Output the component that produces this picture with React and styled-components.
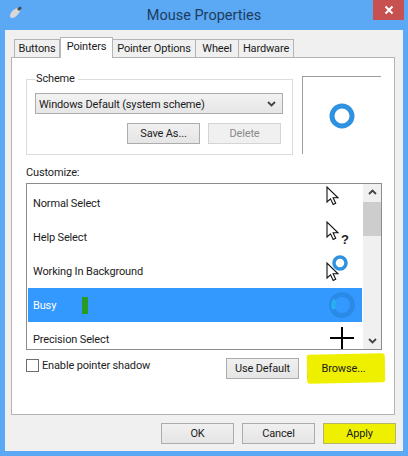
import styled, { createGlobalStyle } from "styled-components"

const GlobalStyle = createGlobalStyle`
	html, body {
		margin: 0;
		padding: 0;
		background: #5ba8f4;
	}
	* {
		box-sizing: border-box;
	}
`

const Window = styled.div`
	width: 408px;
	height: 456px;
	background: #5ba8f4;
	padding: 0 5px 5px;
	display: flex;
	flex-direction: column;
	font-family: Roboto, "Liberation Sans", sans-serif;
	font-size: 11px;
	letter-spacing: -0.15px;
	color: #1c1c1c;
	overflow: hidden;
`

const TitleBar = styled.div`
	height: 30px;
	flex: none;
	position: relative;
	display: flex;
	align-items: center;
	justify-content: center;
	font-size: 14.5px;
	letter-spacing: 0;
	color: #1d3d5c;
`

const AppIcon = styled.svg`
	position: absolute;
	left: 2px;
	top: 4px;
`

const CloseButton = styled.div`
	position: absolute;
	right: -1px;
	top: 0;
	width: 31px;
	height: 20px;
	background: #c75050;
	display: flex;
	align-items: center;
	justify-content: center;
`

const Body = styled.div`
	flex: 1;
	background: #f0f0f0;
	padding: 8px 7px 6px 6px;
	display: flex;
	flex-direction: column;
`

const TabStrip = styled.div`
	display: flex;
	height: 20px;
	padding-left: 3px;
	flex: none;
	position: relative;
	z-index: 1;
`

const Tab = styled.div`
	height: ${(p) => (p.$active ? "21px" : "19px")};
	margin-top: ${(p) => (p.$active ? "-1px" : "1px")};
	width: ${(p) => p.$width}px;
	background: ${(p) => (p.$active ? "#fff" : "#f0f0f0")};
	border: 1px solid #b4b4b4;
	border-left: ${(p) => (p.$first || p.$active ? "1px solid #b4b4b4" : "none")};
	border-bottom: ${(p) => (p.$active ? "none" : "1px solid #b4b4b4")};
	display: flex;
	align-items: center;
	justify-content: center;
	padding-bottom: ${(p) => (p.$active ? "3px" : "0")};
	position: relative;
	z-index: ${(p) => (p.$active ? 2 : 1)};
`

const TabPanel = styled.div`
	background: #fff;
	border: 1px solid #b4b4b4;
	width: 384px;
	height: 358px;
	margin-top: -1px;
	padding: 18px 12px 0 14px;
	flex: none;
`

const TopRow = styled.div`
	display: flex;
	gap: 9px;
	height: 79px;
`

const Group = styled.fieldset`
	width: 267px;
	height: 79px;
	margin: 0;
	padding: 0 8px 0 8px;
	border: 1px solid #dcdcdc;
	position: relative;
	display: flex;
	flex-direction: column;
	min-width: 0;
`

const Legend = styled.legend`
	padding: 0 3px 0 1px;
	margin-left: 0;
	line-height: 14px;
	height: 7px;
	margin-top: 0;
	& > span {
		position: relative;
		top: -4px;
	}
`

const SelectBox = styled.div`
	width: 248px;
	height: 21px;
	margin-top: 10px;
	background: linear-gradient(#f2f2f2, #e6e6e6);
	border: 1px solid #acacac;
	display: flex;
	align-items: center;
	justify-content: space-between;
	padding: 1px 6px 0 3px;
`

const ButtonRow = styled.div`
	display: flex;
	gap: 8px;
	justify-content: flex-end;
	margin-top: 9px;
	padding-right: 3px;
`

const Button = styled.div`
	width: 73px;
	height: 21px;
	flex: none;
	display: flex;
	align-items: center;
	justify-content: center;
	background: ${(p) => (p.$disabled ? "#f0f0f0" : "linear-gradient(#f0f0f0, #e5e5e5)")};
	border: 1px solid ${(p) => (p.$disabled ? "#d4d4d4" : "#acacac")};
	color: ${(p) => (p.$disabled ? "#8a8a8a" : "#1c1c1c")};
`

const MarkedButton = styled(Button)`
	background: #eef000;
	border-color: ${(p) => p.$edge};
	position: relative;
	z-index: 0;
	&::before {
		content: "";
		position: absolute;
		z-index: -1;
		left: ${(p) => p.$spill[0]}px;
		right: ${(p) => p.$spill[1]}px;
		top: ${(p) => p.$spill[2]}px;
		bottom: ${(p) => p.$spill[3]}px;
		background: #eef000;
		border-radius: 2px 3px 2px 3px;
		transform: rotate(-1deg);
	}
`

const Preview = styled.div`
	width: 79px;
	height: 78px;
	border-top: 1px solid #9d9d9d;
	border-left: 1px solid #9d9d9d;
	display: flex;
	align-items: center;
	justify-content: center;
`

const Label = styled.div`
	margin-top: 10px;
	height: 18px;
	line-height: 16px;
`

const List = styled.div`
	width: 356px;
	height: 167px;
	border: 1px solid #8c8c8c;
	display: flex;
	background: #fff;
`

const Rows = styled.div`
	flex: 1;
	padding: 2px 1px 0 1px;
	overflow: hidden;
`

const Row = styled.div`
	height: 34px;
	display: flex;
	align-items: center;
	padding-left: 5px;
	position: relative;
	background: ${(p) => (p.$selected ? "#3399ff" : "transparent")};
	color: ${(p) => (p.$selected ? "#fff" : "#1c1c1c")};
`

const RowIcon = styled.svg`
	position: absolute;
	right: 0;
	top: 0;
	overflow: visible;
`

const BusyBar = styled.div`
	width: 6px;
	height: 17px;
	background: #2a9a22;
	margin-left: 26px;
`

const Scrollbar = styled.div`
	width: 18px;
	flex: none;
	background: #f0f0f0;
	display: flex;
	flex-direction: column;
	align-items: center;
	justify-content: space-between;
	position: relative;
	padding: 5px 0;
`

const Thumb = styled.div`
	position: absolute;
	top: 18px;
	left: 0;
	width: 18px;
	height: 34px;
	background: #cdcdcd;
`

const Options = styled.div`
	display: flex;
	align-items: flex-start;
	margin-top: 8px;
`

const CheckLabel = styled.div`
	display: flex;
	align-items: center;
	gap: 3px;
	width: 200px;
	height: 14px;
`

const CheckBox = styled.div`
	width: 13px;
	height: 13px;
	background: #fff;
	border: 1px solid #6e6e6e;
`

const OptionButtons = styled.div`
	display: flex;
	gap: 8px;
`

const Footer = styled.div`
	display: flex;
	justify-content: flex-end;
	gap: 8px;
	margin-top: 8px;
`

const Arrow = () => (
	<svg width="9" height="6" viewBox="0 0 9 6">
		<path d="M1 1l3.500 3.500L8 1" fill="none" stroke="#444" strokeWidth="1.800" />
	</svg>
)

const ArrowUp = () => (
	<svg width="9" height="6" viewBox="0 0 9 6">
		<path d="M1 5l3.500-3.500L8 5" fill="none" stroke="#444" strokeWidth="1.800" />
	</svg>
)

const Pointer = ({ x, y }) => (
	<path
		transform={`translate(${x} ${y})`}
		d="M0 0v15l3.500-3.200 2.700 5.700 2.500-1.200-2.600-5.500h4.900z"
		fill="#fff"
		stroke="#111"
		strokeWidth="1.100"
	/>
)

const tabs = [
	{ name: "Buttons", width: 46, first: true },
	{ name: "Pointers", width: 53, active: true },
	{ name: "Pointer Options", width: 83 },
	{ name: "Wheel", width: 43 },
	{ name: "Hardware", width: 55 },
]

function App() {
	return (
		<>
			<GlobalStyle />
			<Window>
				<TitleBar>
					<AppIcon width="20" height="16" viewBox="0 0 20 16">
						<path d="M3 12c0-4 5-8 8-8 2 0 3 2 1 5-2 3-5 5-7 5-1 0-2-1-2-2z" fill="#d8d8d8" />
						<path d="M10 5l3-2.500 2 1.500-3 3z" fill="#4a4a4a" />
					</AppIcon>
					Mouse Properties
					<CloseButton>
						<svg width="10" height="10" viewBox="0 0 10 10">
							<path d="M1.500 1.500l7 7M8.500 1.500l-7 7" stroke="#fff" strokeWidth="2" />
						</svg>
					</CloseButton>
				</TitleBar>
				<Body>
					<TabStrip>
						{tabs.map((tab) => (
							<Tab key={tab.name} $active={tab.active} $first={tab.first} $width={tab.width}>
								{tab.name}
							</Tab>
						))}
					</TabStrip>
					<TabPanel>
						<TopRow>
							<Group>
								<Legend><span>Scheme</span></Legend>
								<SelectBox>
									Windows Default (system scheme)
									<Arrow />
								</SelectBox>
								<ButtonRow>
									<Button>Save As...</Button>
									<Button $disabled>Delete</Button>
								</ButtonRow>
							</Group>
							<Preview>
								<svg width="28" height="28" viewBox="0 0 28 28">
									<circle cx="14" cy="14" r="10" fill="none" stroke="#2f92e0" strokeWidth="5" />
								</svg>
							</Preview>
						</TopRow>
						<Label>Customize:</Label>
						<List>
							<Rows>
								<Row>
									Normal Select
									<RowIcon width="37" height="34">
										<Pointer x={2} y={1} />
									</RowIcon>
								</Row>
								<Row>
									Help Select
									<RowIcon width="37" height="34">
										<Pointer x={2} y={2} />
										<text x="16" y="24" fontSize="13" fontWeight="700" fill="#222" fontFamily="Liberation Sans">?</text>
									</RowIcon>
								</Row>
								<Row>
									Working In Background
									<RowIcon width="37" height="34">
										<Pointer x={2} y={9} />
										<circle cx="15" cy="9" r="6" fill="none" stroke="#2f92e0" strokeWidth="3.500" />
									</RowIcon>
								</Row>
								<Row $selected>
									Busy
									<BusyBar />
									<RowIcon width="37" height="34">
										<circle cx="17" cy="17" r="10.500" fill="none" stroke="#2b8ae6" strokeWidth="5" />
										<path d="M9 21a9 9 0 0 1 1-9" fill="none" stroke="#27b0f0" strokeWidth="4" />
									</RowIcon>
								</Row>
								<Row>
									Precision Select
									<RowIcon width="37" height="34">
										<path d="M5 16h24M17 5v22" stroke="#000" strokeWidth="2" />
									</RowIcon>
								</Row>
							</Rows>
							<Scrollbar>
								<ArrowUp />
								<Thumb />
								<Arrow />
							</Scrollbar>
						</List>
						<Options>
							<CheckLabel>
								<CheckBox />
								Enable pointer shadow
							</CheckLabel>
							<OptionButtons>
								<Button>Use Default</Button>
								<MarkedButton $edge="#3f9a6a" $spill={[-1, -6, -5, -5]}>Browse...</MarkedButton>
							</OptionButtons>
						</Options>
					</TabPanel>
					<Footer>
						<Button>OK</Button>
						<Button>Cancel</Button>
						<MarkedButton $edge="#b5b56a" $spill={[1, 0, 1, 1]}>Apply</MarkedButton>
					</Footer>
				</Body>
			</Window>
		</>
	)
}

export default App
